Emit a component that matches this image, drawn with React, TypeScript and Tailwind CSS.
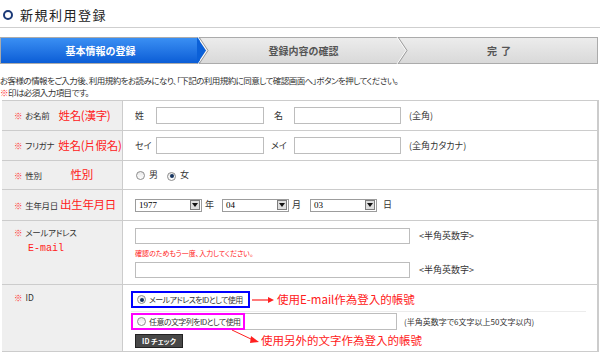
import React from 'react';

// 登録フォーム（ステップ1）の再現

const Radio = ({ checked }: { checked?: boolean }) => (
  <span className="inline-flex h-[9px] w-[9px] shrink-0 items-center justify-center rounded-full border border-[#8c8c8c] bg-gradient-to-b from-[#e8e8e8] to-white">
    {checked && <span className="h-[4px] w-[4px] rounded-full bg-[#17355f]" />}
  </span>
);

const Select = ({ value }: { value: string }) => (
  <div className="flex h-[13px] w-[67px] items-center border border-[#9c9c9c] bg-white pl-[3px]">
    <span className="flex-1 font-['Liberation_Serif',serif] text-[9px] leading-none text-black">{value}</span>
    <span className="mr-[1px] flex h-[10px] w-[10px] items-center justify-center border border-[#7d7d7d] bg-[#dedede]">
      <svg width="6" height="4" viewBox="0 0 6 4">
        <path d="M0 0h6L3 4z" fill="#111" />
      </svg>
    </span>
  </div>
);

const Req = () => <span className="mr-[3px] text-[#ff3030]">※</span>;

const Note = ({ children, className = '' }: { children: React.ReactNode; className?: string }) => (
  <span className={"font-['Noto_Sans_CJK_TC',sans-serif] text-[11.5px] leading-none text-[#ff2020] " + className}>{children}</span>
);

const TextInput = ({ className = '' }: { className?: string }) => (
  <input readOnly className={'border border-[#bdbdbd] bg-white outline-none ' + className} />
);

export default function App() {
  return (
    <div className="h-[354px] w-[600px] overflow-hidden whitespace-nowrap bg-white font-['Noto_Sans_CJK_JP',sans-serif] text-[9px] text-[#333] [font-feature-settings:'palt']">
      {/* タイトル */}
      <div className="flex h-[28px] items-center gap-[7px] border-b border-[#cfcfcf] pl-[3px] pt-[3px]">
        <span className="h-[10px] w-[10px] rounded-full border-[2.5px] border-[#1b3a78]" />
        <h1 className="text-[13px] font-normal tracking-[1.5px] text-[#222]">新規利用登録</h1>
      </div>

      {/* ステップ */}
      <div className="relative mt-[9px] flex h-[27px] w-[598px] border border-[#ababab] bg-gradient-to-b from-[#ececec] to-[#d9d9d9] text-[10px] font-bold">
        <div className="flex w-[199px] items-center justify-center bg-gradient-to-b from-[#3a8ff3] to-[#0a5dd6] text-white">基本情報の登録</div>
        <div className="flex w-[199px] items-center justify-center pl-[8px] text-[#555]">登録内容の確認</div>
        <div className="flex flex-1 items-center justify-center pl-[6px] tracking-[4px] text-[#555]">完了</div>
        <svg className="absolute left-[196px] top-[-1px]" width="12" height="27" viewBox="0 0 12 27">
          <path d="M0 0L9 13.5L0 27z" fill="#0b60d8" />
          <path d="M1 0L10 13.5L1 27" fill="none" stroke="#fff" strokeWidth="1" />
          <path d="M2 0L11 13.5L2 27" fill="none" stroke="#9a9a9a" strokeWidth="1" />
        </svg>
        <svg className="absolute left-[395px] top-[-1px]" width="12" height="27" viewBox="0 0 12 27">
          <path d="M1 0L10 13.5L1 27" fill="none" stroke="#fff" strokeWidth="1" />
          <path d="M2 0L11 13.5L2 27" fill="none" stroke="#9a9a9a" strokeWidth="1" />
        </svg>
      </div>

      {/* 説明 */}
      <div className="mt-[10px] text-[8.5px] leading-[12px] tracking-[-0.55px]">
        <p>お客様の情報をご入力後、利用規約をお読みになり、「下記の利用規約に同意して確認画面へ」ボタンを押してください。</p>
        <p><span className="text-[#ff3030]">※</span>印は必須入力項目です。</p>
      </div>

      {/* フォーム */}
      <div className="ml-[2px] mt-[2px] w-[597px] border-r-2 border-t border-[#cccccc]">
        {/* お名前 */}
        <div className="grid h-[30px] grid-cols-[121px_1fr] border-b border-[#cccccc]">
          <div className="flex items-center border-r border-[#cccccc] bg-[#efefef] pl-[12px] text-[8.5px] tracking-[-0.3px]">
            <Req />
            <span className="mr-[9px]">お名前</span>
            <Note>姓名(漢字)</Note>
          </div>
          <div className="flex items-center pl-[12px]">
            <span className="w-[21px]">姓</span>
            <TextInput className="h-[17px] w-[108px]" />
            <span className="ml-[10px] w-[20px]">名</span>
            <TextInput className="h-[17px] w-[107px]" />
            <span className="ml-[8px]">(全角)</span>
          </div>
        </div>

        {/* フリガナ */}
        <div className="grid h-[30px] grid-cols-[121px_1fr] border-b border-[#cccccc]">
          <div className="flex items-center border-r border-[#cccccc] bg-[#efefef] pl-[12px] text-[8.5px] tracking-[-0.3px]">
            <Req />
            <span className="mr-[4px]">フリガナ</span>
            <Note>姓名(片假名)</Note>
          </div>
          <div className="flex items-center pl-[12px]">
            <span className="w-[21px]">セイ</span>
            <TextInput className="h-[17px] w-[108px]" />
            <span className="ml-[7px] w-[23px]">メイ</span>
            <TextInput className="h-[17px] w-[107px]" />
            <span className="ml-[8px]">(全角カタカナ)</span>
          </div>
        </div>

        {/* 性別 */}
        <div className="grid h-[29px] grid-cols-[121px_1fr] border-b border-[#cccccc]">
          <div className="flex items-center border-r border-[#cccccc] bg-[#efefef] pl-[12px] text-[8.5px] tracking-[-0.3px]">
            <Req />
            <span className="mr-[29px]">性別</span>
            <Note>性別</Note>
          </div>
          <div className="flex items-center pl-[13px]">
            <Radio />
            <span className="ml-[4px]">男</span>
            <span className="ml-[9px]"><Radio checked /></span>
            <span className="ml-[4px]">女</span>
          </div>
        </div>

        {/* 生年月日 */}
        <div className="grid h-[31px] grid-cols-[121px_1fr] border-b border-[#cccccc]">
          <div className="flex items-center border-r border-[#cccccc] bg-[#efefef] pl-[12px] text-[8.5px] tracking-[-0.3px]">
            <Req />
            <span className="mr-[2px]">生年月日</span>
            <Note>出生年月日</Note>
          </div>
          <div className="flex items-center pl-[12px]">
            <Select value="1977" />
            <span className="ml-[3px] w-[17px]">年</span>
            <Select value="04" />
            <span className="ml-[3px] w-[18px]">月</span>
            <Select value="03" />
            <span className="ml-[6px]">日</span>
          </div>
        </div>

        {/* メールアドレス */}
        <div className="grid h-[64px] grid-cols-[121px_1fr] border-b border-[#cccccc]">
          <div className="flex flex-col border-r border-[#cccccc] bg-[#efefef] pl-[12px] pt-[5px] text-[8.5px] tracking-[-0.3px]">
            <div>
              <Req />
              <span>メールアドレス</span>
            </div>
            <span className="ml-[14px] mt-[5px] font-['Liberation_Mono',monospace] text-[10px] leading-none tracking-normal text-[#ff2020]">E-mail</span>
          </div>
          <div className="flex flex-col pl-[12px] pt-[7px]">
            <div className="flex items-center">
              <TextInput className="h-[16px] w-[275px]" />
              <span className="ml-[9px]">&lt;半角英数字&gt;</span>
            </div>
            <span className="mt-[3px] text-[7px] leading-[13px] text-[#ff2020]">確認のためもう一度、入力してください。</span>
            <div className="mt-[2px] flex items-center">
              <TextInput className="h-[16px] w-[275px]" />
              <span className="ml-[9px]">&lt;半角英数字&gt;</span>
            </div>
          </div>
        </div>

        {/* ID */}
        <div className="grid h-[67px] grid-cols-[121px_1fr] border-b border-[#cccccc]">
          <div className="border-r border-[#cccccc] bg-[#efefef] pl-[12px] pt-[6px] text-[8.5px]">
            <Req />
            <span>ID</span>
          </div>
          <div className="relative flex flex-col pl-[8px] pt-[6px]">
            <div className="flex items-center">
              <div className="flex h-[17px] w-[119px] items-center gap-[3px] overflow-hidden border-2 border-[#0000ff] pl-[4px] text-[8px] tracking-[-0.6px]">
                <Radio checked />
                <span>メールアドレスをIDとして使用</span>
              </div>
              <svg width="24" height="8" viewBox="0 0 24 8" className="ml-[1px]">
                <path d="M1 4H18" stroke="#ff2020" strokeWidth="1.2" />
                <path d="M17 1L23 4L17 7z" fill="#ff2020" />
              </svg>
              <Note className="ml-[2px]">使用E-mail作為登入的帳號</Note>
            </div>
            <div className="mt-[3px] w-[455px] border-t border-[#ececec]" />
            <div className="mt-[1px] flex items-center">
              <div className="relative h-[17px] w-[266px]">
                <TextInput className="h-[17px] w-[266px]" />
                <div className="absolute left-0 top-0 flex h-[17px] w-[114px] items-center gap-[3px] overflow-hidden border-2 border-[#ff00ff] bg-white pl-[4px] text-[8px] tracking-[-0.6px]">
                  <Radio />
                  <span>任意の文字列をIDとして使用</span>
                </div>
              </div>
              <span className="ml-[7px] text-[8px]">(半角英数字で6文字以上50文字以内)</span>
            </div>
            <button className="ml-[4px] mt-[4px] flex h-[14px] w-[48px] items-center justify-center border border-[#222] bg-[#484848] text-[7px] font-bold text-white">
              ID チェック
            </button>
            <svg className="absolute left-[108px] top-[44px]" width="30" height="16" viewBox="0 0 30 16">
              <path d="M1 1L22 11" stroke="#ff2020" strokeWidth="1" />
              <path d="M20 7L28 13L19 14z" fill="#ff2020" />
            </svg>
            <Note className="absolute left-[138px] top-[50px]">使用另外的文字作為登入的帳號</Note>
          </div>
        </div>
      </div>
    </div>
  );
}
